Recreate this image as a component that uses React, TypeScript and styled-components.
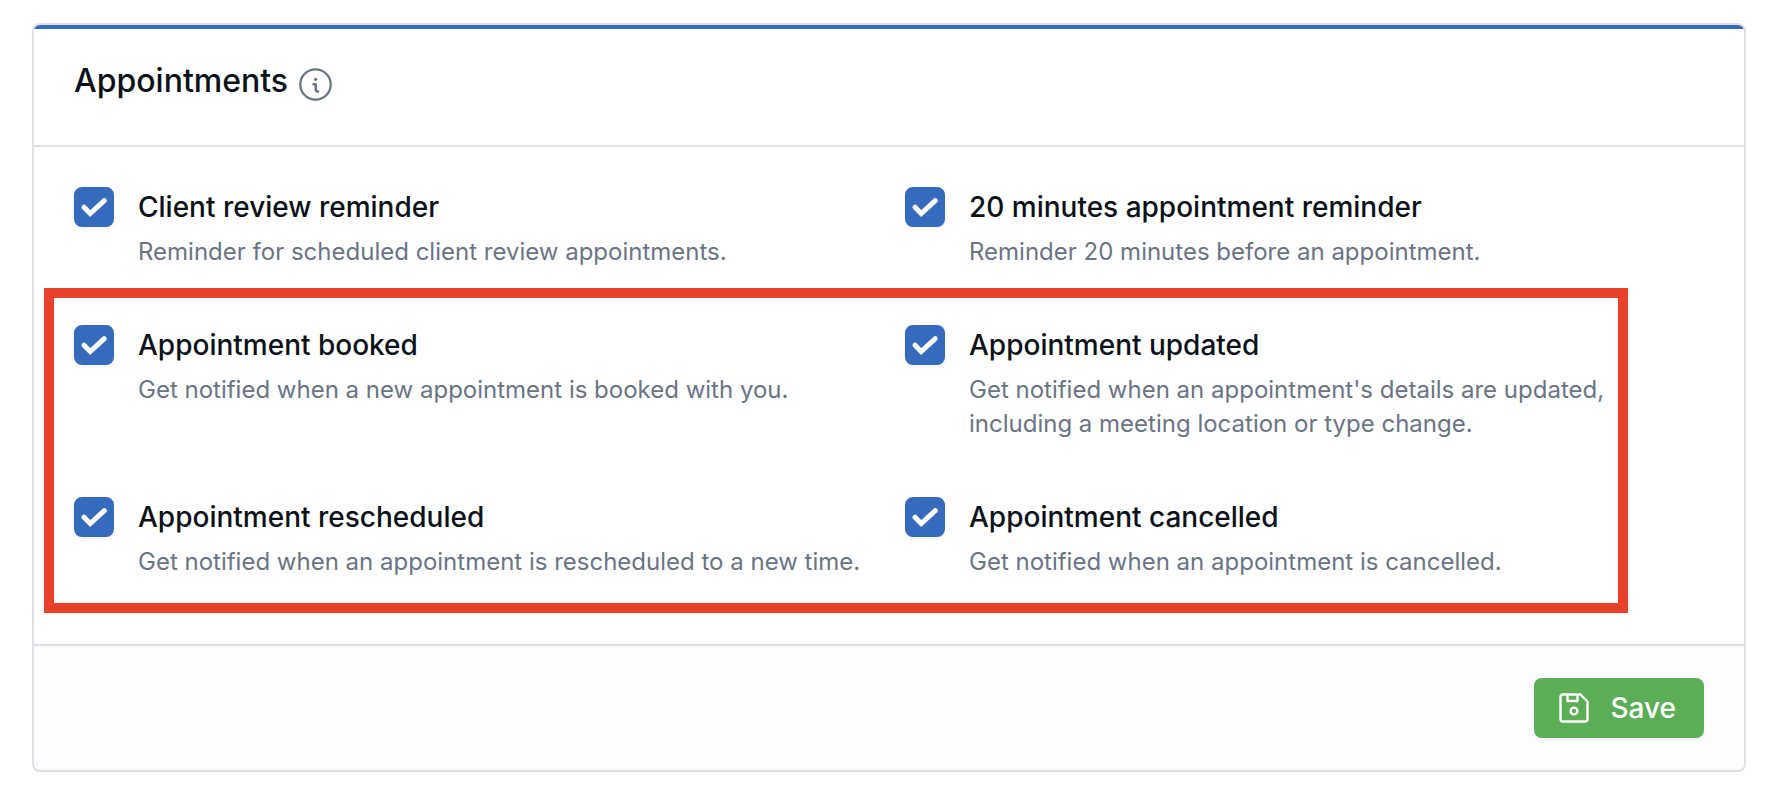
import React, { useId, useState } from "react";
import styled, { createGlobalStyle } from "styled-components";

const GlobalStyle = createGlobalStyle`
  *, *::before, *::after { box-sizing: border-box; }
  body {
    margin: 0;
    background: #ffffff;
    color: #0b1118;
    font-family: Inter, "Liberation Sans", sans-serif;
    -webkit-font-smoothing: antialiased;
  }
  h2, p { margin: 0; }
`;

const Page = styled.main`
  padding: 23px 36px 26px 32px;
`;

const Card = styled.form`
  border: 2px solid #dfe0e6;
  border-radius: 8px;
  overflow: hidden;
  background: #ffffff;
`;

const CardHeader = styled.header`
  display: flex;
  align-items: flex-end;
  gap: 11px;
  padding: 32px 40px 44px;
  border-top: 4px solid #366abc;
  border-bottom: 2px solid #dfe0e6;
`;

const Title = styled.h2`
  font-size: 32px;
  line-height: 40px;
  font-weight: 500;
`;

const InfoButton = styled.button`
  display: flex;
  padding: 0;
  border: 0;
  background: none;
  color: #6a7485;
`;

const CardBody = styled.div`
  padding: 40px 40px 65px;
`;

const OptionGrid = styled.div`
  display: grid;
  grid-template-columns: repeat(2, minmax(0, 1fr));
  column-gap: 32px;
  row-gap: 56px;
`;

const HighlightedGrid = styled(OptionGrid)`
  position: relative;
  margin-top: 56px;

  &::after {
    content: "";
    position: absolute;
    inset: -37px 76px -34px -30px;
    border: 10px solid #ea412b;
    pointer-events: none;
  }
`;

const OptionRow = styled.div`
  display: flex;
  align-items: flex-start;
  gap: 24px;
`;

const CheckWrap = styled.span`
  display: grid;
  flex: none;

  > * { grid-area: 1 / 1; }
  > svg { pointer-events: none; }
`;

const CheckInput = styled.input`
  appearance: none;
  width: 40px;
  height: 40px;
  margin: 0;
  border: 2px solid #dfe0e6;
  border-radius: 8px;
  background: #ffffff;
  box-shadow: 0 2px 4px rgba(0, 0, 0, 0.06);

  &:checked {
    border-color: #366abc;
    background: #366abc;
  }
`;

const OptionText = styled.div`
  display: flex;
  flex-direction: column;
  gap: 8px;
  min-width: 0;
`;

const OptionLabel = styled.label`
  font-size: 28px;
  line-height: 40px;
  font-weight: 500;
`;

const OptionDescription = styled.p`
  color: #6a7485;
  font-size: 24px;
  line-height: 34px;
`;

const CardFooter = styled.footer`
  display: flex;
  justify-content: flex-end;
  padding: 32px 40px;
  border-top: 2px solid #dcdfe4;
  background: #fcfdff;
`;

const SaveButton = styled.button`
  display: flex;
  align-items: center;
  gap: 20px;
  height: 60px;
  padding: 0 28px 0 24px;
  border: 0;
  border-radius: 8px;
  background: #5bae55;
  box-shadow: 0 2px 4px rgba(0, 0, 0, 0.06);
  color: #ffffff;
  font-family: inherit;
  font-size: 28px;
  line-height: 40px;
  font-weight: 500;
`;

const InfoIcon = () => (
  <svg width="33" height="33" viewBox="0 0 33 33" fill="none" stroke="currentColor" aria-hidden="true">
    <circle cx="16.5" cy="16.5" r="15.2" strokeWidth="2.3" />
    <circle cx="16.7" cy="11.3" r="1.6" fill="currentColor" stroke="none" />
    <path d="M14.5 16.2H16.8V21.5Q16.8 23.4 18.7 23.4H19" strokeWidth="2.5" strokeLinecap="round" strokeLinejoin="round" />
  </svg>
);

const CheckIcon = () => (
  <svg width="40" height="40" viewBox="0 0 40 40" fill="none" aria-hidden="true">
    <path d="M10 20.2L16.2 26.5L30.3 13.6" stroke="#ffffff" strokeWidth="5" strokeLinecap="round" strokeLinejoin="miter" />
  </svg>
);

const SaveIcon = () => (
  <svg width="32" height="32" viewBox="0 0 32 32" fill="none" stroke="currentColor" strokeWidth="2.4" strokeLinejoin="round" aria-hidden="true">
    <path d="M5 2.5H22.5L29.5 9.5V27Q29.5 29.5 27 29.5H5Q2.5 29.5 2.5 27V5Q2.5 2.5 5 2.5Z" />
    <path d="M9.5 2.5V9H19.5V2.5" />
    <circle cx="16" cy="19" r="3.4" />
  </svg>
);

type OptionProps = { label: string; description: string };

function Option({ label, description }: OptionProps) {
  const id = useId();
  const [checked, setChecked] = useState(true);
  return (
    <OptionRow>
      <CheckWrap>
        <CheckInput
          type="checkbox"
          id={id}
          checked={checked}
          aria-describedby={`${id}-hint`}
          onChange={(event) => setChecked(event.target.checked)}
        />
        {checked && <CheckIcon />}
      </CheckWrap>
      <OptionText>
        <OptionLabel htmlFor={id}>{label}</OptionLabel>
        <OptionDescription id={`${id}-hint`}>{description}</OptionDescription>
      </OptionText>
    </OptionRow>
  );
}

const reminders: OptionProps[] = [
  { label: "Client review reminder", description: "Reminder for scheduled client review appointments." },
  { label: "20 minutes appointment reminder", description: "Reminder 20 minutes before an appointment." },
];

const changes: OptionProps[] = [
  { label: "Appointment booked", description: "Get notified when a new appointment is booked with you." },
  {
    label: "Appointment updated",
    description: "Get notified when an appointment's details are updated, including a meeting location or type change.",
  },
  { label: "Appointment rescheduled", description: "Get notified when an appointment is rescheduled to a new time." },
  { label: "Appointment cancelled", description: "Get notified when an appointment is cancelled." },
];

export default function App() {
  return (
    <>
      <GlobalStyle />
      <Page>
        <Card onSubmit={(event: React.FormEvent) => event.preventDefault()}>
          <CardHeader>
            <Title>Appointments</Title>
            <InfoButton type="button" aria-label="About appointments">
              <InfoIcon />
            </InfoButton>
          </CardHeader>
          <CardBody>
            <OptionGrid>
              {reminders.map((option) => (
                <Option key={option.label} {...option} />
              ))}
            </OptionGrid>
            <HighlightedGrid>
              {changes.map((option) => (
                <Option key={option.label} {...option} />
              ))}
            </HighlightedGrid>
          </CardBody>
          <CardFooter>
            <SaveButton type="submit">
              <SaveIcon />
              Save
            </SaveButton>
          </CardFooter>
        </Card>
      </Page>
    </>
  );
}
